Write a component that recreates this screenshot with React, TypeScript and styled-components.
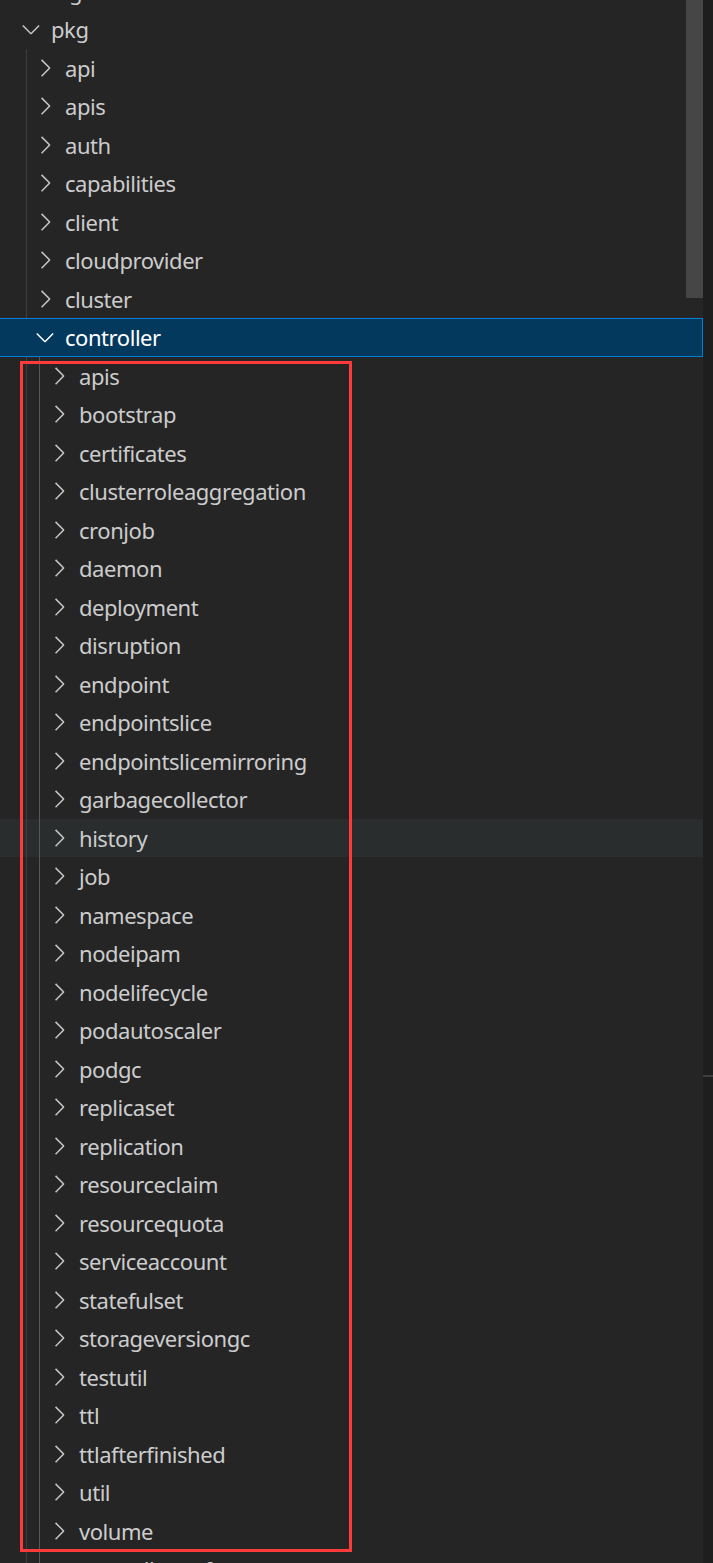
import React from "react";
import styled, { createGlobalStyle, css } from "styled-components";

const GlobalStyle = createGlobalStyle`
  html, body {
    margin: 0;
    padding: 0;
    background: #252526;
    overflow: hidden;
  }
  #root {
    height: 1563px;
  }
`;

type RowState = "normal" | "selected" | "hover";

interface Node {
  name: string;
  level: number;
  kind: "collapsed" | "expanded" | "file";
  state?: RowState;
}

const level2 = [
  "apis",
  "bootstrap",
  "certificates",
  "clusterroleaggregation",
  "cronjob",
  "daemon",
  "deployment",
  "disruption",
  "endpoint",
  "endpointslice",
  "endpointslicemirroring",
  "garbagecollector",
  "history",
  "job",
  "namespace",
  "nodeipam",
  "nodelifecycle",
  "podautoscaler",
  "podgc",
  "replicaset",
  "replication",
  "resourceclaim",
  "resourcequota",
  "serviceaccount",
  "statefulset",
  "storageversiongc",
  "testutil",
  "ttl",
  "ttlafterfinished",
  "util",
  "volume",
];

const nodes: Node[] = [
  { name: "logo", level: 0, kind: "collapsed" },
  { name: "pkg", level: 0, kind: "expanded" },
  ...["api", "apis", "auth", "capabilities", "client", "cloudprovider", "cluster"].map(
    (n): Node => ({ name: n, level: 1, kind: "collapsed" })
  ),
  { name: "controller", level: 1, kind: "expanded", state: "selected" },
  ...level2.map(
    (n): Node => ({
      name: n,
      level: 2,
      kind: "collapsed",
      state: n === "history" ? "hover" : "normal",
    })
  ),
  { name: "controller_ref_manager.go", level: 2, kind: "file" },
];

const Page = styled.div`
  display: flex;
  height: 1563px;
  overflow: hidden;
  font-family: "Noto Sans", "Open Sans", sans-serif;
`;

const Explorer = styled.div`
  position: relative;
  width: 703px;
  flex: none;
  height: 100%;
  overflow: hidden;
  background: #252526;
`;

const EdgeStrip = styled.div`
  flex: 1;
  display: flex;
  flex-direction: column;
  background: #1e1e1e;
  padding-top: 1075px;
  box-sizing: border-box;
`;

const EdgeMark = styled.div`
  height: 2px;
  background: #3e3e3e;
`;

const TreeList = styled.div`
  display: flex;
  flex-direction: column;
  margin-top: -28.5px;
`;

const Row = styled.div<{ $state: RowState }>`
  display: flex;
  align-items: center;
  height: 38.5px;
  box-sizing: border-box;
  color: #cccccc;
  ${({ $state }) =>
    $state === "selected" &&
    css`
      background: #04395e;
      border: 1.75px solid #007fd4;
      border-left: none;
      color: #ffffff;
    `}
  ${({ $state }) =>
    $state === "hover" &&
    css`
      background: #2a2d2e;
    `}
`;

const Indent = styled.div<{ $level: number }>`
  width: ${({ $level }) => 17 + 14 * $level}px;
  flex: none;
  align-self: stretch;
  display: flex;
`;

const Guide = styled.div<{ $first: boolean; $active: boolean }>`
  flex: none;
  width: ${({ $first }) => ($first ? 26 : 12.25)}px;
  border-right: 1.75px solid ${({ $active }) => ($active ? "#585858" : "#3e3e3f")};
`;

const Twistie = styled.div<{ $selected: boolean }>`
  width: 28px;
  height: 28px;
  flex: none;
  display: flex;
  align-items: center;
  justify-content: center;
  color: ${({ $selected }) => ($selected ? "#ffffff" : "#c5c5c5")};
  svg {
    display: block;
  }
`;

const Label = styled.span`
  padding-left: 6px;
  font-size: 22px;
  letter-spacing: -0.45px;
  white-space: nowrap;
  line-height: 1;
`;

const Slider = styled.div`
  position: absolute;
  top: 0;
  right: 0;
  width: 17px;
  height: 298px;
  background: rgba(121, 121, 121, 0.4);
`;

const Annotation = styled.div`
  position: absolute;
  left: 20px;
  top: 361px;
  width: 332px;
  height: 1191px;
  box-sizing: border-box;
  border: 3px solid #ff3a3a;
  pointer-events: none;
`;

const ChevronRight = () => (
  <svg width="28" height="28" viewBox="0 0 16 16" fill="currentColor">
    <path d="M10.072 8.024L5.715 3.667l.618-.62L11 7.716v.618L6.333 13l-.618-.619 4.357-4.357z" />
  </svg>
);

const ChevronDown = () => (
  <svg width="28" height="28" viewBox="0 0 16 16" fill="currentColor">
    <path d="M7.976 10.072l4.357-4.357.62.618L8.284 11h-.618L3 6.333l.619-.618 4.357 4.357z" />
  </svg>
);

const TreeRow: React.FC<{ node: Node }> = ({ node }) => {
  const state = node.state ?? "normal";
  const guides = state === "selected" ? [] : Array.from({ length: node.level }, (_, i) => i);
  return (
    <Row $state={state}>
      <Indent $level={node.level}>
        {guides.map((i) => (
          <Guide key={i} $first={i === 0} $active={i === 1} />
        ))}
      </Indent>
      <Twistie $selected={state === "selected"}>
        {node.kind === "expanded" && <ChevronDown />}
        {node.kind === "collapsed" && <ChevronRight />}
      </Twistie>
      <Label>{node.name}</Label>
    </Row>
  );
};

export default function App() {
  return (
    <>
      <GlobalStyle />
      <Page>
        <Explorer>
          <TreeList>
            {nodes.map((n, i) => (
              <TreeRow key={i} node={n} />
            ))}
          </TreeList>
          <Slider />
          <Annotation />
        </Explorer>
        <EdgeStrip>
          <EdgeMark />
        </EdgeStrip>
      </Page>
    </>
  );
}
